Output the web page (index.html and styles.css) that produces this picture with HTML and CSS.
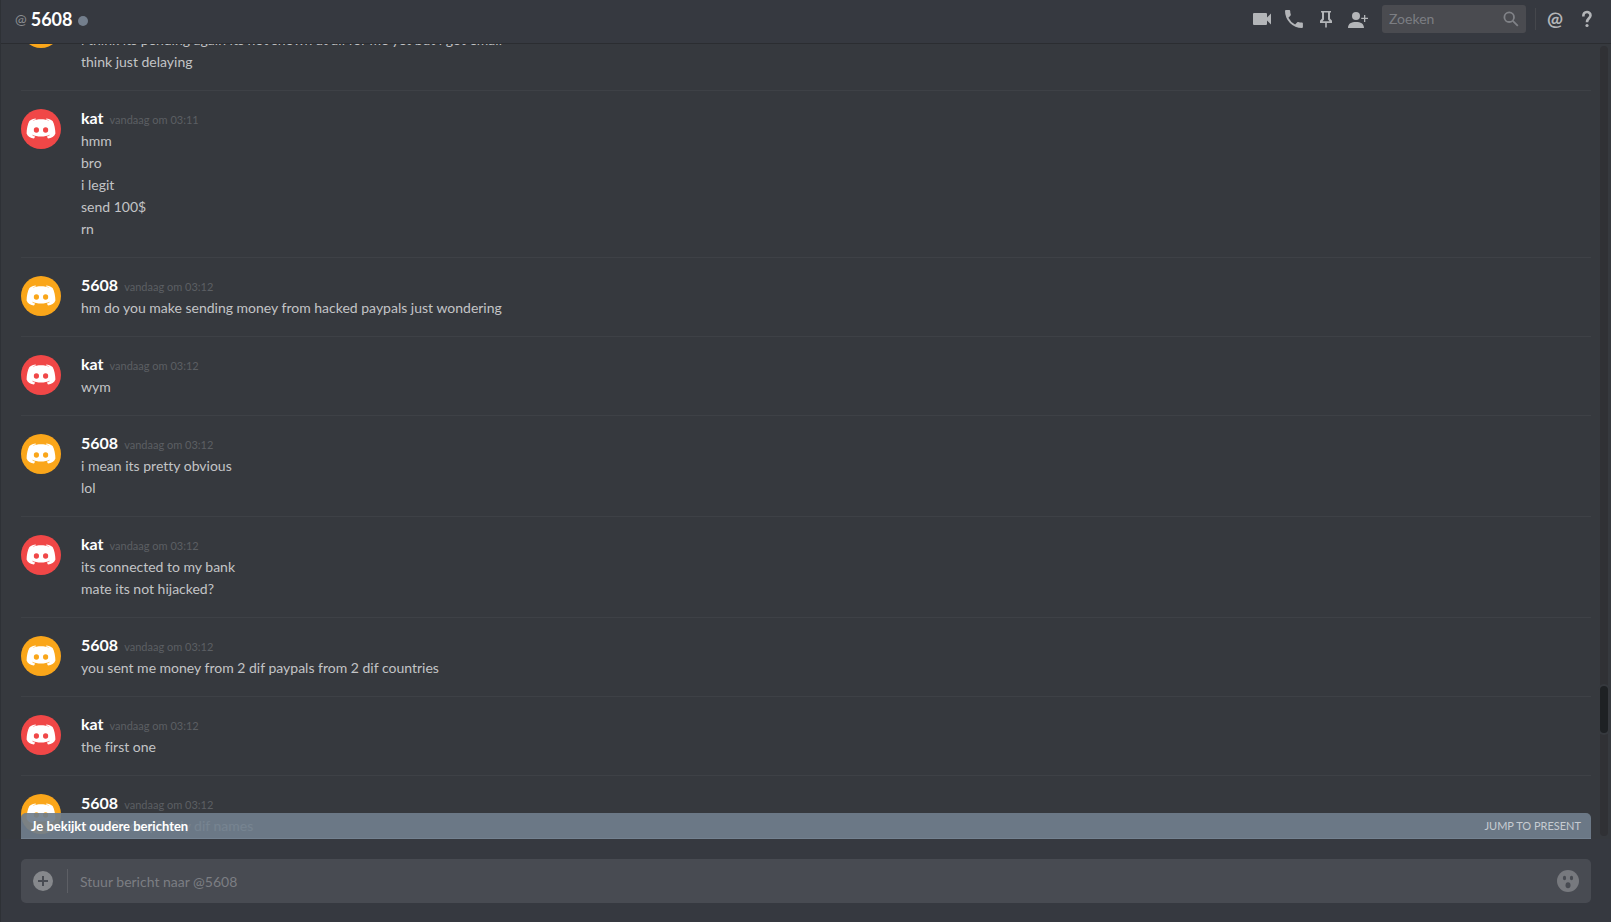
FILE: index.html
```html
<!DOCTYPE html>
<html lang="nl">
<head>
<meta charset="utf-8">
<meta name="viewport" content="width=device-width, initial-scale=1">
<title>@5608</title>
<link rel="stylesheet" href="styles.css">
</head>
<body>
<svg width="0" height="0" class="sprite" aria-hidden="true">
  <symbol id="logo" viewBox="0 0 30 22">
    <path fill="#fff" d="M9.600 0.500C7.600 0.700 5.200 1.600 3.400 2.900C1.700 5.800 0.600 11 0.600 15.600C1.500 18.500 4.600 20.300 8 20.500L9.200 18.600C7.400 18.100 6.400 17.200 5.800 16.400C11 19.100 19 19.100 24.200 16.400C23.600 17.200 22.600 18.100 20.800 18.600L22 20.500C25.400 20.300 28.500 18.500 29.400 15.600C29.400 11 28.300 5.800 26.600 2.900C24.800 1.600 22.400 0.700 20.400 0.500L19.900 1.200C21.800 1.700 23.100 2.400 24 3.100C18.500 0.700 11.500 0.700 6 3.100C6.900 2.400 8.200 1.700 10.100 1.200Z"/>
    <ellipse class="eye" cx="10.400" cy="12" rx="2.600" ry="2.800"/>
    <ellipse class="eye" cx="19.600" cy="12" rx="2.600" ry="2.800"/>
  </symbol>
</svg>
<div class="app">
  <header class="topbar">
    <h1 class="title"><span class="at">@</span>5608<span class="status"></span></h1>
    <div class="tools">
      <button class="tool" aria-label="Videogesprek starten"><svg width="20" height="20" viewBox="0 0 20 20"><path d="M2 4h12a1 1 0 0 1 1 1v3.500l4-4v11l-4-4V15a1 1 0 0 1-1 1H2a1 1 0 0 1-1-1V5a1 1 0 0 1 1-1z"/></svg></button>
      <button class="tool" aria-label="Spraakoproep starten"><svg width="20" height="20" viewBox="0 0 20 20"><path d="M2 1h3.200a1 1 0 0 1 1 1c0 1.200.2 2.400.6 3.500.1.400 0 .7-.2 1L4.400 8.700a15 15 0 0 0 6.700 6.700l2.200-2.200c.3-.3.700-.4 1-.2 1.100.4 2.300.6 3.600.6a1 1 0 0 1 1 1V18a1 1 0 0 1-1 1A17 17 0 0 1 1 2a1 1 0 0 1 1-1z"/></svg></button>
      <button class="tool" aria-label="Vastgezette berichten"><svg width="20" height="20" viewBox="0 0 20 20"><path fill-rule="evenodd" d="M5 2h10v1.600h-1v6l2 2.200V14h-5.200v4.500H9.200V14H4v-2.200l2-2.200v-6H5zM8 3.600v6.800L6.500 12.200h7L12 10.400V3.600z"/></svg></button>
      <button class="tool" aria-label="Vrienden toevoegen"><svg width="20" height="20" viewBox="0 0 20 20"><circle cx="8" cy="7" r="4"/><path d="M0 19c0-4.500 3.500-6 8-6s8 1.500 8 6zM16 6h1.300v2.800H20v1.300h-2.700V13H16v-2.900h-2.800V8.800H16z"/></svg></button>
      <form class="search" role="search">
        <input type="search" placeholder="Zoeken" aria-label="Zoeken">
        <svg width="16" height="16" viewBox="0 0 16 16" fill="none" stroke="#808287" stroke-width="1.800"><circle cx="6.200" cy="6.200" r="4.800"/><path d="M9.800 9.800l5 5"/></svg>
      </form>
      <span class="rule"></span>
      <button class="tool glyph" aria-label="Vermeldingen">@</button>
      <button class="tool" aria-label="Help"><svg width="20" height="20" viewBox="0 0 20 20"><path fill="none" stroke="#b3b5b8" stroke-width="2.600" d="M6.300 7.500C6.300 1.500 13.700 2 13.500 6.500C13.400 9.300 10 9.400 10 13.200"/><circle cx="10" cy="16.500" r="1.600"/></svg></button>
    </div>
  </header>
  <main class="chat">
    <div class="messages">
      <article class="group orange"><div class="avatar"><svg><use href="#logo"/></svg></div><div class="body"><h2>5608<time>vandaag om 03:11</time></h2><p>i think its pending again its not shown at all for me yet but i got email</p><p>think just delaying</p></div></article>
      <article class="group red"><div class="avatar"><svg><use href="#logo"/></svg></div><div class="body"><h2>kat<time>vandaag om 03:11</time></h2><p>hmm</p><p>bro</p><p>i legit</p><p>send 100$</p><p>rn</p></div></article>
      <article class="group orange"><div class="avatar"><svg><use href="#logo"/></svg></div><div class="body"><h2>5608<time>vandaag om 03:12</time></h2><p>hm do you make sending money from hacked paypals just wondering</p></div></article>
      <article class="group red"><div class="avatar"><svg><use href="#logo"/></svg></div><div class="body"><h2>kat<time>vandaag om 03:12</time></h2><p>wym</p></div></article>
      <article class="group orange"><div class="avatar"><svg><use href="#logo"/></svg></div><div class="body"><h2>5608<time>vandaag om 03:12</time></h2><p>i mean its pretty obvious</p><p>lol</p></div></article>
      <article class="group red"><div class="avatar"><svg><use href="#logo"/></svg></div><div class="body"><h2>kat<time>vandaag om 03:12</time></h2><p>its connected to my bank</p><p>mate its not hijacked?</p></div></article>
      <article class="group orange"><div class="avatar"><svg><use href="#logo"/></svg></div><div class="body"><h2>5608<time>vandaag om 03:12</time></h2><p>you sent me money from 2 dif paypals from 2 dif countries</p></div></article>
      <article class="group red"><div class="avatar"><svg><use href="#logo"/></svg></div><div class="body"><h2>kat<time>vandaag om 03:12</time></h2><p>the first one</p></div></article>
      <article class="group orange"><div class="avatar"><svg><use href="#logo"/></svg></div><div class="body"><h2>5608<time>vandaag om 03:12</time></h2><p>with 2 completely dif names</p></div></article>
    </div>
    <div class="track"><div class="thumb"></div></div>
    <div class="notice"><span>Je bekijkt oudere berichten</span><button>JUMP TO PRESENT</button></div>
  </main>
  <form class="composer">
    <button type="button" class="add" aria-label="Bestand toevoegen"><svg width="20" height="20" viewBox="0 0 20 20"><circle cx="10" cy="10" r="10" fill="#86888c"/><path d="M10 5v10M5 10h10" stroke="#484b52" stroke-width="2"/></svg></button>
    <input type="text" placeholder="Stuur bericht naar @5608" aria-label="Stuur bericht naar @5608">
    <button type="button" class="emoji" aria-label="Emoji kiezen"><svg width="22" height="22" viewBox="0 0 22 22"><circle cx="11" cy="11" r="11" fill="#77797e"/><g fill="#484b52"><ellipse cx="7.500" cy="8" rx="1.600" ry="2.300"/><ellipse cx="14.500" cy="8" rx="1.600" ry="2.300"/><ellipse cx="11" cy="15.300" rx="2.500" ry="3"/></g></svg></button>
  </form>
</div>
</body>
</html>
```
FILE: styles.css
```css
* { box-sizing: border-box; }
body {
  margin: 0;
  background: #36393e;
  color: #c3c4c6;
  font-family: Lato, "Open Sans", sans-serif;
  font-size: 14px;
  font-variant-ligatures: none;
}
h1, h2, p { margin: 0; }
button {
  padding: 0;
  border: 0;
  background: none;
  color: inherit;
  font: inherit;
  cursor: pointer;
}
svg { display: block; }
.sprite { position: absolute; }
.app {
  display: flex;
  flex-direction: column;
  height: 100vh;
  background: #363940;
  border-left: 1px solid #2e3136;
}
.topbar {
  display: flex;
  flex: none;
  align-items: center;
  justify-content: space-between;
  height: 44px;
  padding: 0 14px 6px;
  border-bottom: 1px solid #2b2d31;
}
.title {
  display: flex;
  align-items: center;
  color: #fff;
  font-size: 18px;
  font-weight: 700;
  line-height: 24px;
}
.at {
  margin-right: 4px;
  color: #8b8d91;
  font-size: 14px;
  font-weight: 400;
}
.status {
  width: 10px;
  height: 10px;
  margin: 4px 0 0 6px;
  border-radius: 50%;
  background: #747f8d;
}
.tools {
  display: flex;
  align-items: center;
  gap: 12px;
}
.tool {
  width: 20px;
  height: 20px;
  color: #b3b5b8;
}
.tool svg { fill: #b3b5b8; }
.glyph {
  font-size: 19px;
  font-weight: 700;
  line-height: 20px;
}
.search {
  display: flex;
  align-items: center;
  width: 144px;
  height: 28px;
  margin-left: 2px;
  padding: 0 7px;
  border-radius: 3px;
  background: #4a4b50;
}
.rule {
  width: 1px;
  height: 22px;
  margin: 0 -3px;
  background: #45474c;
}
.search input {
  flex: 1;
  min-width: 0;
}
input {
  padding: 0;
  border: 0;
  outline: 0;
  background: none;
  color: #c3c4c6;
  font: inherit;
}
input::placeholder { color: #7c7e83; opacity: 1; }
.chat {
  position: relative;
  flex: 1;
  min-height: 0;
  overflow: hidden;
  background: #36393e;
}
.messages {
  margin: -55px 20px 0;
}
.group {
  display: flex;
  gap: 20px;
  padding: 18px 0 17px;
  border-top: 1px solid #3e4146;
}
.avatar {
  display: flex;
  flex: none;
  align-items: center;
  justify-content: center;
  width: 40px;
  height: 40px;
  border-radius: 50%;
}
.avatar svg { width: 30px; height: 22px; }
.orange .avatar { background: #faa61a; }
.orange { --eye: #faa61a; }
.red .avatar { background: #f04747; }
.red { --eye: #f04747; }
.eye { fill: var(--eye); }
.body { min-width: 0; }
.body h2 {
  display: flex;
  align-items: baseline;
  gap: 6px;
  height: 21px;
  color: #fff;
  font-size: 16px;
  font-weight: 700;
  line-height: 18px;
}
.body time {
  color: #5c5f63;
  font-size: 11px;
  font-weight: 400;
}
.body p { line-height: 22px; }
.track {
  position: absolute;
  top: 2px;
  right: 3px;
  bottom: 3px;
  width: 8px;
  border-radius: 4px;
  background: #303135;
}
.thumb {
  position: absolute;
  top: 81%;
  left: 0;
  width: 8px;
  height: 47px;
  border-radius: 4px;
  background: #1e2124;
  box-shadow: 0 0 0 2px #36393e;
}
.notice {
  position: absolute;
  right: 20px;
  bottom: 0;
  left: 20px;
  display: flex;
  align-items: center;
  justify-content: space-between;
  height: 26px;
  padding: 0 10px;
  border-bottom: 1px solid #748291;
  border-radius: 5px 5px 0 0;
  background: rgba(112, 126, 140, 0.92);
  color: #fff;
  font-size: 13px;
  font-weight: 700;
}
.notice button {
  color: #c6ccd2;
  font-size: 11px;
  font-weight: 400;
}
.composer {
  display: flex;
  flex: none;
  align-items: center;
  height: 44px;
  margin: 20px 20px 19px;
  padding: 0 12px;
  border-radius: 5px;
  background: #484b52;
}
.add {
  padding-right: 14px;
  border-right: 1px solid #5d5f65;
  height: 24px;
}
.composer input {
  flex: 1;
  min-width: 0;
  padding-left: 12px;
}
```
